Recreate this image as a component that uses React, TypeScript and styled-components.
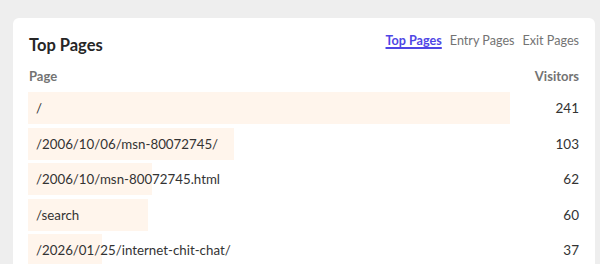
import * as React from 'react';
import styled, { createGlobalStyle } from 'styled-components';

const GlobalStyle = createGlobalStyle`
  html, body {
    margin: 0;
    padding: 0;
    background: #eeeeee;
    font-family: Lato, "Noto Sans", sans-serif;
  }
`;

const Page = styled.div`
  width: 600px;
  height: 264px;
  overflow: hidden;
  padding: 18px 5px 0 13px;
  box-sizing: border-box;
`;

const Card = styled.section`
  background: #ffffff;
  border-radius: 6px;
  padding: 15px 16px 16px 15px;
  box-sizing: border-box;
  min-height: 300px;
`;

const Header = styled.header`
  display: flex;
  justify-content: space-between;
  align-items: flex-start;
`;

const Title = styled.h3`
  margin: 0;
  padding-left: 1px;
  font-size: 16.5px;
  line-height: 24px;
  font-weight: 700;
  color: #262626;
`;

const Tabs = styled.nav`
  display: flex;
  gap: 8px;
  margin-top: -1px;
`;

const Tab = styled.span<{ $active?: boolean }>`
  font-size: 12.6px;
  line-height: 18px;
  font-weight: ${p => (p.$active ? 700 : 400)};
  color: ${p => (p.$active ? '#4f46e5' : '#737373')};
  text-decoration: ${p => (p.$active ? 'underline' : 'none')};
  text-decoration-thickness: 2px;
  text-underline-offset: 2px;
  cursor: pointer;
`;

const ColumnHeads = styled.div`
  display: flex;
  justify-content: space-between;
  margin-top: 10px;
  padding-left: 1px;
  font-size: 13px;
  line-height: 18px;
  font-weight: 700;
  color: #737373;
`;

const List = styled.div`
  display: flex;
  flex-direction: column;
  gap: 3.5px;
  margin-top: 7px;
`;

const Row = styled.div`
  display: flex;
  align-items: center;
  height: 32px;
`;

const BarTrack = styled.div`
  position: relative;
  flex: 0 0 482px;
  height: 100%;
`;

const Bar = styled.div`
  position: absolute;
  left: 0;
  top: 0;
  bottom: 0;
  background: #fff5ec;
`;

const Label = styled.span`
  position: relative;
  display: flex;
  align-items: center;
  height: 100%;
  padding-left: 8px;
  font-size: 13.3px;
  color: #333333;
  white-space: nowrap;
`;

const Count = styled.span`
  flex: 1;
  text-align: right;
  font-size: 13.5px;
  color: #333333;
`;

const rows = [
  { path: '/', visitors: 241 },
  { path: '/2006/10/06/msn-80072745/', visitors: 103 },
  { path: '/2006/10/msn-80072745.html', visitors: 62 },
  { path: '/search', visitors: 60 },
  { path: '/2026/01/25/internet-chit-chat/', visitors: 37 },
];

export default function App() {
  const max = Math.max(...rows.map(r => r.visitors));
  return (
    <Page>
      <GlobalStyle />
      <Card>
        <Header>
          <Title>Top Pages</Title>
          <Tabs>
            <Tab $active>Top Pages</Tab>
            <Tab>Entry Pages</Tab>
            <Tab>Exit Pages</Tab>
          </Tabs>
        </Header>
        <ColumnHeads>
          <span>Page</span>
          <span>Visitors</span>
        </ColumnHeads>
        <List>
          {rows.map(r => (
            <Row key={r.path}>
              <BarTrack>
                <Bar style={{ width: `${(r.visitors / max) * 100}%` }} />
                <Label>{r.path}</Label>
              </BarTrack>
              <Count>{r.visitors}</Count>
            </Row>
          ))}
        </List>
      </Card>
    </Page>
  );
}
